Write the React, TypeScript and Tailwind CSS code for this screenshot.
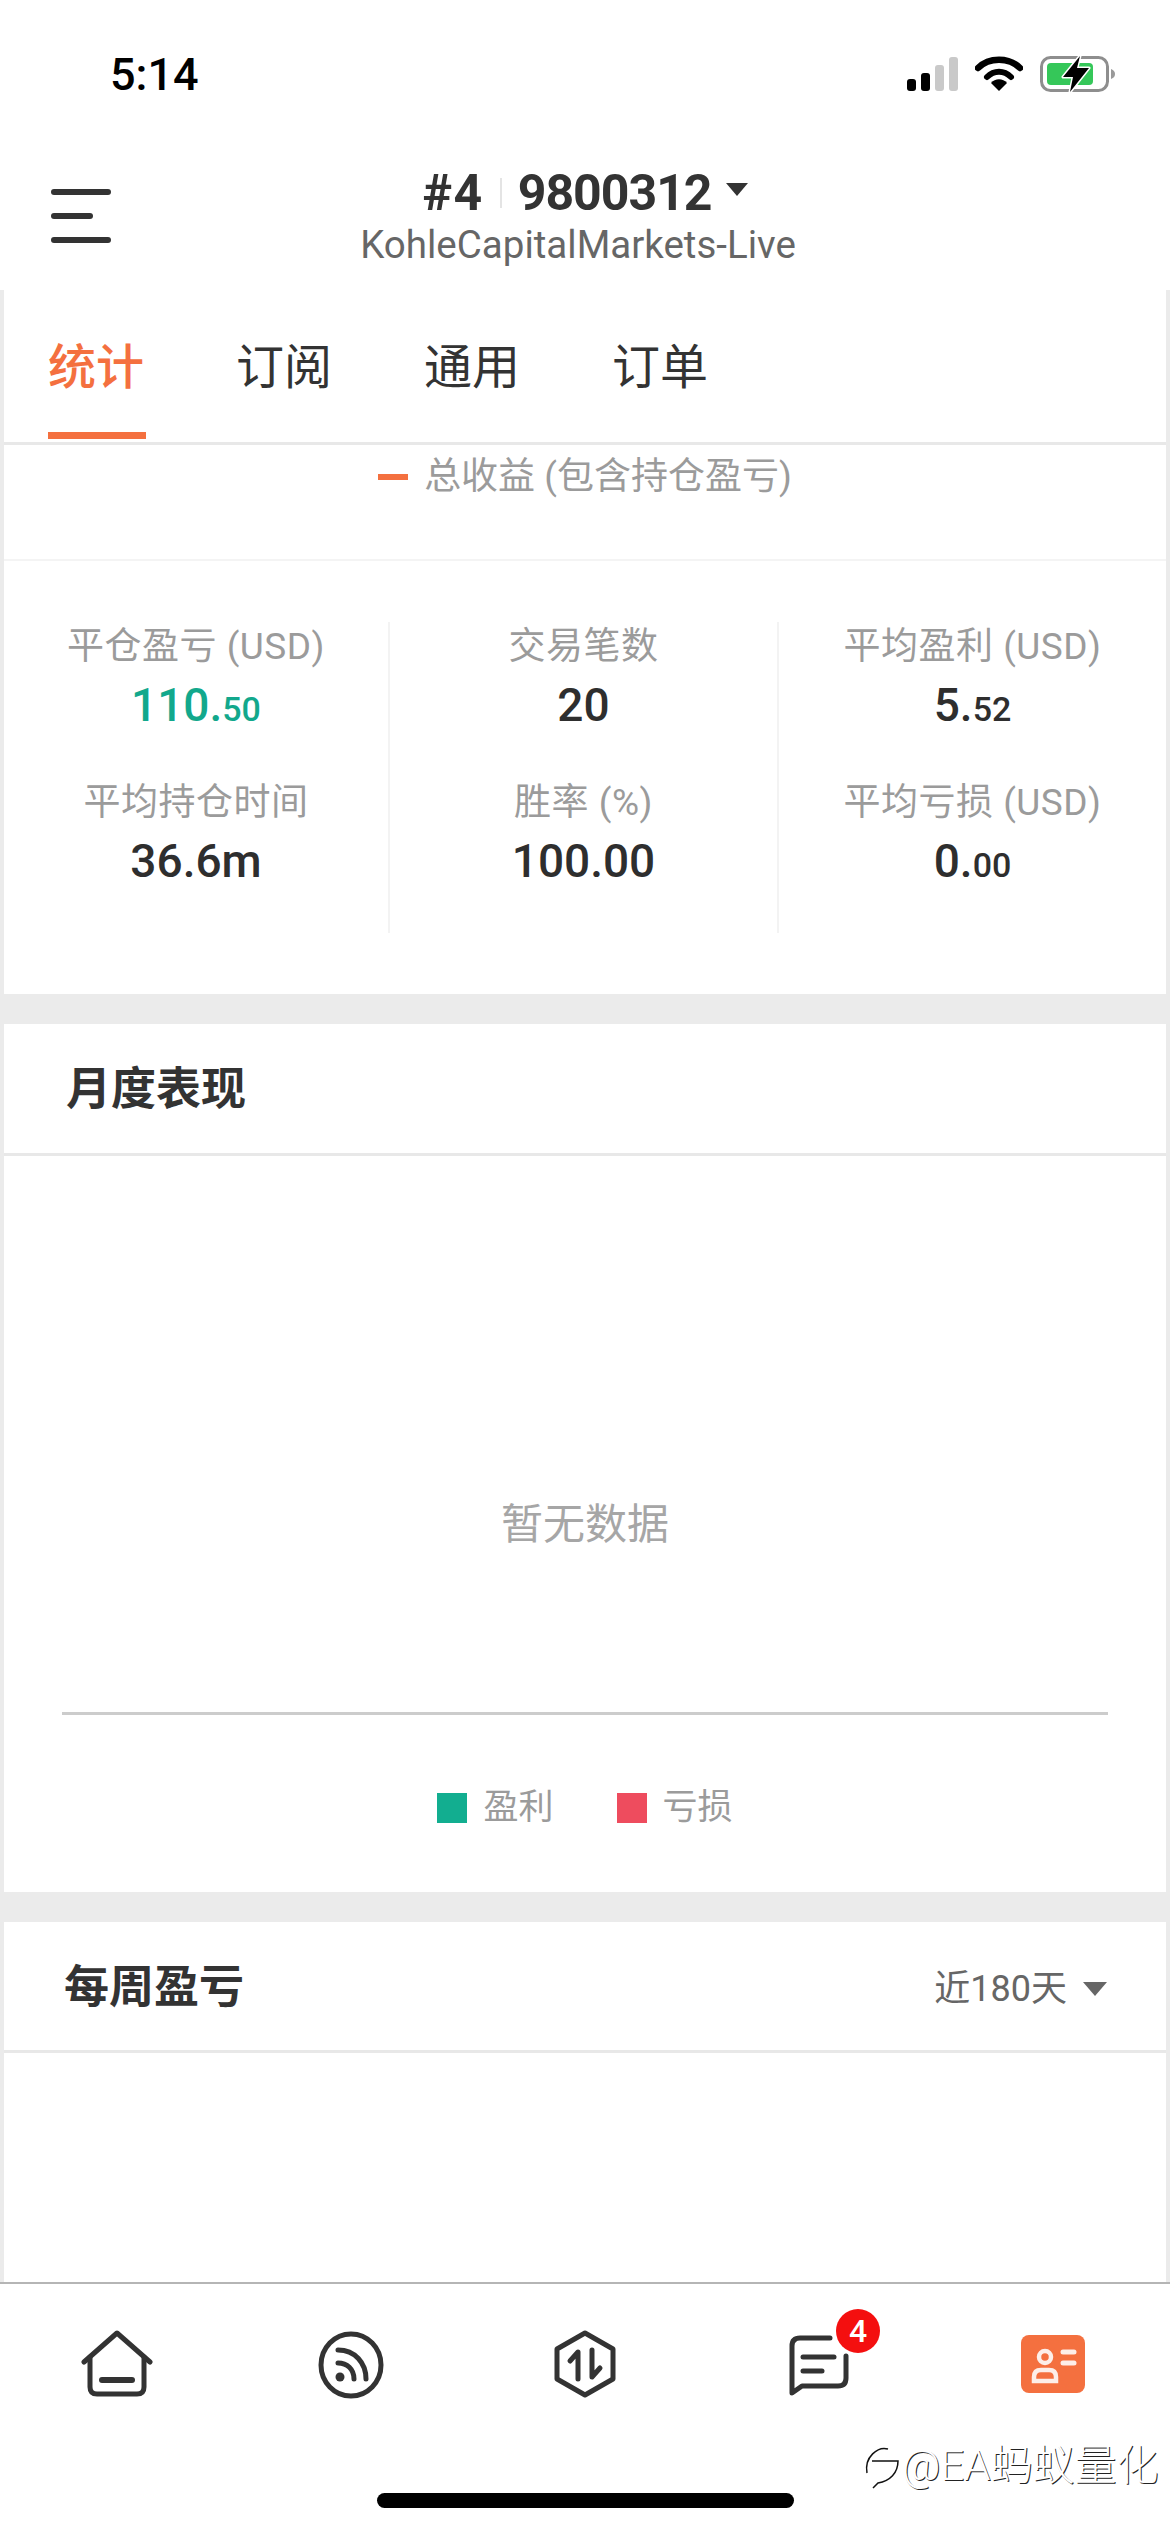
import type { ReactNode } from "react";

const ORANGE = "#f4703f";

function StatusIcons() {
  return (
    <div className="flex items-center gap-[17px]">
      <svg width="51" height="34" viewBox="0 0 51 34">
        <rect x="0" y="22" width="9" height="12" rx="3" fill="#000" />
        <rect x="14" y="16" width="9" height="18" rx="3" fill="#000" />
        <rect x="28" y="8" width="9" height="26" rx="3" fill="#c9c9c9" />
        <rect x="42" y="0" width="9" height="34" rx="3" fill="#c9c9c9" />
      </svg>
      <svg width="48" height="36" viewBox="0 0 48 36">
        <path d="M3 12 C14 1 34 1 45 12" fill="none" stroke="#000" strokeWidth="6.5" strokeLinecap="round" />
        <path d="M12 21 C19 14 29 14 36 21" fill="none" stroke="#000" strokeWidth="6" strokeLinecap="round" />
        <path d="M16 27 C20 22 28 22 32 27 L24 35 Z" fill="#000" />
      </svg>
      <svg width="75" height="38" viewBox="0 0 75 38">
        <rect x="1.5" y="2.5" width="66" height="33" rx="9" fill="none" stroke="#8e8e8e" strokeWidth="3" />
        <rect x="7" y="8" width="46" height="22" rx="4" fill="#35c759" />
        <path d="M71 14 C74 15 75 17 75 19 C75 21 74 23 71 24 Z" fill="#9a9a9a" />
        <path d="M40 1 L23 22 L33 22 L30 37 L49 13 L37 13 Z" fill="#000" stroke="#fff" strokeWidth="3" strokeLinejoin="round" paintOrder="stroke" />
      </svg>
    </div>
  );
}

function Stat({ label, value, small, green }: { label: string; value: string; small?: string; green?: boolean }) {
  return (
    <div className="flex flex-col items-center">
      <div className="h-[40px] text-[37px] leading-[40px] tracking-[0.5px] text-[#9b9b9b]">{label}</div>
      <div className={`mt-[18px] h-[40px] text-[46px] leading-[40px] font-[490] ${green ? "text-[#12a88c]" : "text-[#2e2e2e]"}`}>
        {value}
        {small && <span className="text-[34px]">{small}</span>}
      </div>
    </div>
  );
}

function StatColumn({ children, className }: { children: ReactNode; className: string }) {
  return <div className={`flex h-[311px] flex-col gap-[58px] pt-[5px] ${className}`}>{children}</div>;
}

function NavIcons() {
  return (
    <div className="flex h-[250px] items-start border-t-2 border-[#b5b5b5] bg-white">
      <div className="flex w-[234px] justify-center pt-[46px]">
        <svg width="72" height="67" viewBox="0 0 72 67" fill="none" stroke="#333" strokeWidth="5" strokeLinecap="round" strokeLinejoin="round">
          <path d="M3 32 L36 3 L69 32" />
          <path d="M9 27 V57 Q9 64 16 64 H56 Q63 64 63 57 V27" />
          <path d="M21 50 H51" strokeWidth="6" />
        </svg>
      </div>
      <div className="flex w-[234px] justify-center pt-[47px]">
        <svg width="66" height="68" viewBox="0 0 66 68" fill="none" stroke="#333" strokeWidth="5" strokeLinecap="round">
          <ellipse cx="33" cy="34" rx="30" ry="31" />
          <path d="M20 19 C37 19 48 32 48 48" />
          <path d="M20 32 C29 32 36 38 36 48" />
          <circle cx="22" cy="46" r="4.5" fill="#333" stroke="none" />
        </svg>
      </div>
      <div className="flex w-[234px] justify-center pt-[46px]">
        <svg width="62" height="68" viewBox="0 0 62 68" fill="none" stroke="#333" strokeWidth="5" strokeLinecap="round" strokeLinejoin="round">
          <path d="M31 3 L59 19 V49 L31 65 L3 49 V19 Z" />
          <path d="M24 49 V22 L16 31" />
          <path d="M38 20 V47 L46 38" />
        </svg>
      </div>
      <div className="flex w-[234px] justify-center pt-[51px]">
        <div className="relative h-[62px] w-[60px]">
          <svg width="60" height="62" viewBox="0 0 60 62" fill="none" stroke="#333" strokeWidth="5" strokeLinecap="round" strokeLinejoin="round">
            <path d="M41 3 H11 Q3 3 3 11 V58 L13 51 H49 Q57 51 57 43 V21" />
            <path d="M14 22 H45" />
            <path d="M14 36 H33" />
          </svg>
          <div className="absolute left-[47px] top-[-26px] flex h-[44px] w-[44px] items-center justify-center rounded-full bg-[#f40f0f] text-[32px] font-medium leading-none text-white">
            4
          </div>
        </div>
      </div>
      <div className="flex w-[234px] justify-center pt-[51px]">
        <svg width="64" height="58" viewBox="0 0 64 58">
          <rect width="64" height="58" rx="8" fill={ORANGE} />
          <g fill="none" stroke="#fdeee8" strokeWidth="4.5" strokeLinecap="round">
            <circle cx="24" cy="22" r="6" />
            <path d="M13 46 V42 Q13 35 20 35 H28 Q35 35 35 42 V46 Z" />
            <path d="M42 17 H53" strokeWidth="5" />
            <path d="M42 28 H53" strokeWidth="5" />
          </g>
        </svg>
      </div>
    </div>
  );
}

export default function App() {
  return (
    <div className="relative flex h-[2532px] w-[1170px] flex-col overflow-hidden bg-white font-['Roboto','Noto_Sans_CJK_SC',sans-serif]">
      {/* status bar */}
      <div className="flex h-[96px] shrink-0 items-center justify-between pl-[110px] pr-[55px] pt-[52px]">
        <span className="text-[45px] font-medium leading-none text-black">5:14</span>
        <StatusIcons />
      </div>

      {/* header */}
      <div className="relative flex h-[194px] shrink-0 flex-col items-center pt-[72px]">
        <div className="absolute left-[51px] top-[93px] flex flex-col gap-[18px]">
          <div className="h-[6px] w-[60px] rounded-full bg-[#333]" />
          <div className="h-[6px] w-[42px] rounded-full bg-[#333]" />
          <div className="h-[6px] w-[60px] rounded-full bg-[#333]" />
        </div>
        <div className="flex h-[50px] items-center text-[50px] font-bold leading-none text-[#333]">
          <span className="tracking-[1.5px]">#4</span>
          <span className="mx-[16px] h-[30px] w-[2px] bg-[#e4e4e4]" />
          <span className="tracking-[-1px]">9800312</span>
          <span className="ml-[14px] mb-[8px] h-0 w-0 border-x-[11px] border-t-[13px] border-x-transparent border-t-[#333]" />
        </div>
        <div className="mt-[6px] pr-[14px] text-[38.5px] leading-[42px] text-[#666]">KohleCapitalMarkets-Live</div>
      </div>

      {/* scrolled content */}
      <div className="flex h-[1992px] shrink-0 flex-col border-x-4 border-[#ebebeb]">
        {/* tabs */}
        <div className="flex h-[155px] shrink-0 items-start gap-[92px] border-b-[3px] border-[#e8e8e8] pl-[44px] pt-[50px] text-[48px] leading-[56px] text-[#333]">
          <div className="relative font-medium" style={{ color: ORANGE }}>
            统计
            <div className="absolute bottom-[-43px] left-0 right-[-2px] h-[7px]" style={{ background: ORANGE }} />
          </div>
          <div>订阅</div>
          <div>通用</div>
          <div>订单</div>
        </div>

        {/* chart legend */}
        <div className="flex h-[116px] shrink-0 items-start justify-center gap-[16px] border-b-2 border-[#f4f4f4] pt-[11px] text-[37px] leading-[42px] text-[#9b9b9b]">
          <div className="mt-[18px] h-[6px] w-[30px]" style={{ background: ORANGE }} />
          <span>总收益 (包含持仓盈亏)</span>
        </div>

        {/* stats */}
        <div className="flex h-[433px] shrink-0 items-start pt-[61px]">
          <StatColumn className="w-[386px] border-r-2 border-[#f3f3f3]">
            <Stat label="平仓盈亏 (USD)" value="110." small="50" green />
            <Stat label="平均持仓时间" value="36.6m" />
          </StatColumn>
          <StatColumn className="w-[389px] border-r-2 border-[#f3f3f3]">
            <Stat label="交易笔数" value="20" />
            <Stat label="胜率 (%)" value="100.00" />
          </StatColumn>
          <StatColumn className="flex-1">
            <Stat label="平均盈利 (USD)" value="5." small="52" />
            <Stat label="平均亏损 (USD)" value="0." small="00" />
          </StatColumn>
        </div>

        <div className="h-[30px] shrink-0 bg-[#ebebeb]" />

        {/* monthly */}
        <div className="flex h-[132px] shrink-0 items-center border-b-[3px] border-[#e8e8e8] pl-[62px] pt-[2px] text-[45px] font-bold leading-none text-[#333]">
          月度表现
        </div>
        <div className="flex h-[559px] shrink-0 flex-col justify-end px-[58px]">
          <div className="flex flex-1 items-center justify-center pt-[180px] text-[42px] text-[#a6a6a6]">暂无数据</div>
          <div className="h-[3px] bg-[#cccccc]" />
        </div>
        <div className="flex h-[177px] shrink-0 items-start justify-center pt-[70px] text-[35px] leading-[44px] text-[#9b9b9b]">
          <div className="mt-[8px] h-[30px] w-[30px] bg-[#12ae90]" />
          <span className="ml-[16px] pt-[1px]">盈利</span>
          <div className="ml-[63px] mt-[8px] h-[30px] w-[30px] bg-[#ee4c5e]" />
          <span className="ml-[16px] pt-[1px]">亏损</span>
        </div>

        <div className="h-[30px] shrink-0 bg-[#ebebeb]" />

        {/* weekly */}
        <div className="flex h-[131px] shrink-0 items-center justify-between border-b-[3px] border-[#e8e8e8] pl-[60px] pr-[59px] pt-[2px]">
          <span className="text-[45px] font-bold leading-none text-[#333]">每周盈亏</span>
          <div className="flex items-center gap-[16px] pt-[4px] text-[36px] leading-none text-[#666]">
            <span>近180天</span>
            <span className="h-0 w-0 border-x-[12px] border-t-[14px] border-x-transparent border-t-[#666]" />
          </div>
        </div>
      </div>

      <NavIcons />

      {/* home indicator */}
      <div className="absolute left-[377px] top-[2493px] h-[15px] w-[417px] rounded-full bg-black" />

      {/* watermark */}
      <div className="absolute left-[864px] top-[2438px] flex items-center gap-[2px] text-[42px] font-light leading-[56px] text-white [text-shadow:1px_1px_0_#222]">
        <svg width="36" height="46" viewBox="0 0 36 46" fill="none" stroke="#111" strokeWidth="1.5">
          <path d="M3 30 C0 14 14 3 24 6" />
          <path d="M8 18 H34 C34 30 26 38 14 40 L9 45" />
        </svg>
        <span>@EA蚂蚁量化</span>
      </div>
    </div>
  );
}
